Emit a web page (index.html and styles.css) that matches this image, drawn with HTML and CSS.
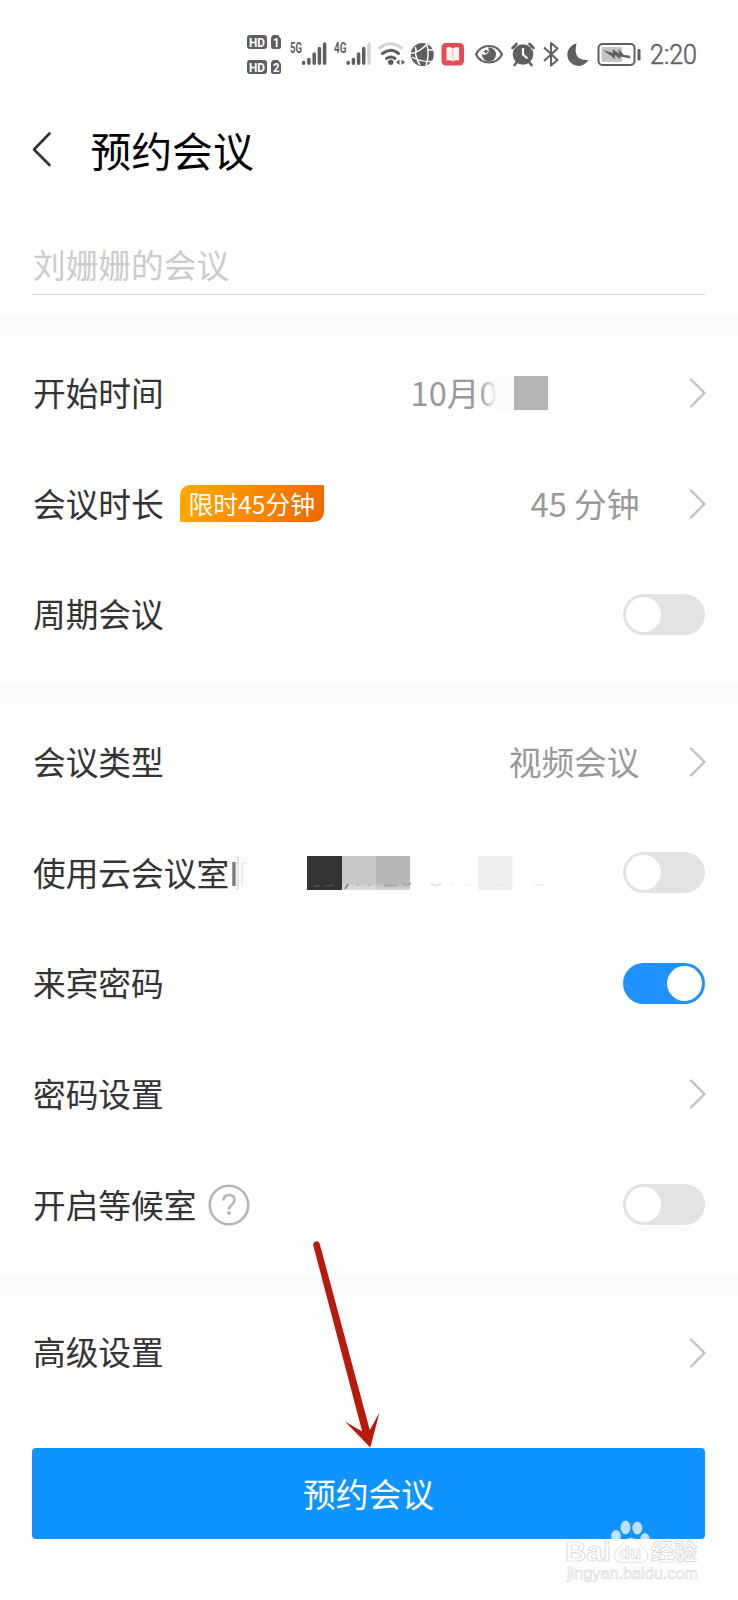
FILE: index.html
```html
<!DOCTYPE html>
<html lang="zh-CN">
<head>
<meta charset="utf-8">
<title>预约会议</title>
<link rel="stylesheet" href="styles.css">
</head>
<body>
<div class="page">
  <header class="status-bar">
    <svg class="status-icons" width="480" height="70" viewBox="235 20 480 70" fill="#5f5f5f">
      <g class="hd">
        <rect x="247" y="35" width="20" height="14" rx="3"/>
        <path d="M273 35h5l3 4v7.500q0 2.500-2.500 2.500h-5q-2.500 0-2.500-2.500v-9z"/>
        <rect x="247" y="60" width="20" height="14" rx="3"/>
        <path d="M273 60h5l3 4v7.500q0 2.500-2.500 2.500h-5q-2.500 0-2.500-2.500v-9z"/>
        <g fill="#fff">
          <text x="249" y="46.800" textLength="16" lengthAdjust="spacingAndGlyphs">HD</text>
          <text x="273" y="46.800" textLength="6.500" lengthAdjust="spacingAndGlyphs">1</text>
          <text x="249" y="71.800" textLength="16" lengthAdjust="spacingAndGlyphs">HD</text>
          <text x="273" y="71.800" textLength="6.500" lengthAdjust="spacingAndGlyphs">2</text>
        </g>
      </g>
      <g class="net">
        <text x="290" y="52.500" textLength="12" lengthAdjust="spacingAndGlyphs">5G</text>
        <text x="334" y="52.500" textLength="12.500" lengthAdjust="spacingAndGlyphs">4G</text>
      </g>
      <g stroke="#5f5f5f" stroke-width="3.500" stroke-linecap="round">
        <path d="M303.600 62.500v.8M308.900 59.500v3.800M314.200 54v9.300M319.400 48.500v14.800M324.600 44v19.300"/>
        <path d="M348.200 62.500v.8M353.400 59.500v3.800M358.600 54v9.300M363.700 48.500v14.800"/>
        <path d="M369 44v19.300" stroke="#d3d3d3"/>
      </g>
      <g fill="none" stroke="#5f5f5f" stroke-width="3" stroke-linecap="round">
        <path d="M379.500 48q11.500-8.500 22 0" stroke="#d3d3d3"/>
        <path d="M382.500 53.500q8.500-6.500 16 0M386.500 58.500q4.500-3 8.500 0"/>
      </g>
      <circle cx="390.800" cy="62.300" r="2.700"/>
      <path d="M399.500 59.500v5.500l-3.500-2.700zM401.500 59.500v5.500l3.500-2.700z"/>
      <circle cx="422.300" cy="54.500" r="11.500"/>
      <g fill="none" stroke="#fff" stroke-width="1.400">
        <path d="M411 53.500Q420 52 426.500 44.500M412 57Q420 62 432 61.500M426.500 43.500Q430 54 426 65.500M415 47Q417 50 415.500 54Q417 61 420 65M427.500 50L433 50"/>
      </g>
      <rect x="441.500" y="43" width="22.500" height="22.500" rx="4.500" fill="#e44c54"/>
      <path d="M446.500 47.500q4-1.500 6.300 1q2.300-2.500 6.300-1v13q-4-1-6.300 1q-2.300-2-6.300-1z" fill="#fff3f3"/>
      <path d="M452.800 48v13" stroke="#f0b3b6" stroke-width="1"/>
      <path d="M476 54.300Q480 46 489 46Q498 46 502 54.300Q498 62.600 489 62.600Q480 62.600 476 54.300z" fill="none" stroke="#5f5f5f" stroke-width="2"/>
      <circle cx="489" cy="54.500" r="7"/>
      <path d="M482 54q0-6 6-6.700q2 5-1.500 7q-2.500 1-4.500-.3z" fill="#fff"/>
      <circle cx="486" cy="51.500" r="1.700"/>
      <g>
        <circle cx="523" cy="54.500" r="10.300"/>
        <path d="M512.500 48l4-4M529.500 44l4 4M517 62l-2.500 3M529 62l2.500 3" stroke="#5f5f5f" stroke-width="2.600" stroke-linecap="round"/>
        <path d="M523 48v6.500l4.500 4" fill="none" stroke="#fff" stroke-width="2.200"/>
      </g>
      <path d="M544 47.500l13.500 12.500l-6.500 5.500V43l6.500 5.500L544 61" fill="none" stroke="#5f5f5f" stroke-width="2" stroke-linejoin="round"/>
      <path d="M576.500 43.500a11.300 11.300 0 1 0 12 16.500q-16 1.500-12-16.500z"/>
      <rect x="598.500" y="44" width="36" height="21" rx="4" fill="#fff" stroke="#5f5f5f" stroke-width="2"/>
      <rect x="601.500" y="47" width="20.500" height="15" rx="1" fill="#c5c5c5"/>
      <path d="M603 50l10 3l-.5-4l6.500 4.500l-.500-4.500l5.500 6l5 .5l-1-2l3 5l-11-2l.5 2.500l-6-4l.5 4l-6-4.500z"/>
      <rect x="637.500" y="49" width="3" height="11.500" rx="1.300"/>
      <text class="clock" x="650" y="64" textLength="47" lengthAdjust="spacingAndGlyphs">2:20</text>
    </svg>
  </header>

  <div class="title-bar">
    <svg class="back" width="20" height="38" viewBox="0 0 20 38"><path d="M17.500 2.500L2 18.500l15.500 15.500"/></svg>
    <h1 class="title">预约会议</h1>
  </div>

  <div class="name-field"><span class="placeholder">刘姗姗的会议</span></div>

  <section class="group">
    <div class="row">
      <span class="label">开始时间</span>
      <span class="value start-time">10月0<span class="mask"></span></span>
      <svg class="chevron" viewBox="0 0 18 32"><path d="M2 2.500L15.500 16L2 29.500"/></svg>
    </div>
    <div class="row">
      <span class="label">会议时长</span>
      <span class="badge">限时45分钟</span>
      <span class="value">45 分钟</span>
      <svg class="chevron" viewBox="0 0 18 32"><path d="M2 2.500L15.500 16L2 29.500"/></svg>
    </div>
    <div class="row">
      <span class="label">周期会议</span>
      <span class="switch"></span>
    </div>
  </section>

  <section class="group">
    <div class="row">
      <span class="label">会议类型</span>
      <span class="value">视频会议</span>
      <svg class="chevron" viewBox="0 0 18 32"><path d="M2 2.500L15.500 16L2 29.500"/></svg>
    </div>
    <div class="row">
      <span class="label">使用云会议室</span>
      <svg class="mosaic" width="320" height="36" viewBox="230 854 320 36">
        <defs>
          <linearGradient id="fade"><stop offset="0" stop-color="#fff"/><stop offset="1" stop-color="#dcdcdc"/></linearGradient>
          <linearGradient id="drop" x2="0" y2="1"><stop offset=".8" stop-color="#fff" stop-opacity="0"/><stop offset="1" stop-color="#fff" stop-opacity=".45"/></linearGradient>
        </defs>
        <rect x="234" y="855" width="5" height="34" fill="url(#fade)"/>
        <rect x="232.300" y="861" width="3.200" height="24" fill="#777"/>
        <path d="M242 885v-23h5" fill="none" stroke="#ededed" stroke-width="2"/>
        <rect x="307" y="855" width="35" height="34" fill="#333"/>
        <rect x="342" y="855" width="34" height="34" fill="#c8c8c8"/>
        <rect x="376" y="855" width="34" height="34" fill="#b7b7b7"/>
        <rect x="342" y="855" width="68" height="34" fill="url(#drop)"/>
        <rect x="478" y="855" width="34.500" height="34" fill="#efefef"/>
        <g fill="none" stroke-width="1.800">
          <path d="M314 885h6M325 884.500q4 1.500 8-1" stroke="#484848"/>
          <path d="M345 888l3-5" stroke="#888"/>
          <path d="M358 883v2M368 885l2-2" stroke="#b2b2b2"/>
          <path d="M384 884.500h13M402 882q4 4 9 0" stroke="#a8a8a8"/>
          <path d="M431 882q5 5 10 0" stroke="#e4e4e4"/>
          <path d="M450 884l2-3M466 883q3 2 6 0M534 884h10" stroke="#f2f2f2"/>
          <path d="M496 883q4 3 8 0" stroke="#e8e8e8"/>
        </g>
      </svg>
      <span class="switch"></span>
    </div>
    <div class="row">
      <span class="label">来宾密码</span>
      <span class="switch on"></span>
    </div>
    <div class="row">
      <span class="label">密码设置</span>
      <svg class="chevron" viewBox="0 0 18 32"><path d="M2 2.500L15.500 16L2 29.500"/></svg>
    </div>
    <div class="row">
      <span class="label">开启等候室</span>
      <svg class="help" width="42" height="42" viewBox="0 0 42 42">
        <circle cx="21" cy="21" r="19.300"/>
        <path d="M15.500 16.500q0-5.500 5.500-5.500t5.500 5q0 2.500-3 5q-2.500 2-2.500 4.500"/>
        <circle class="dot" cx="21" cy="29" r="1.900"/>
      </svg>
      <span class="switch"></span>
    </div>
  </section>

  <section class="group">
    <div class="row">
      <span class="label">高级设置</span>
      <svg class="chevron" viewBox="0 0 18 32"><path d="M2 2.500L15.500 16L2 29.500"/></svg>
    </div>
  </section>

  <button class="submit"><span class="submit-text">预约会议</span></button>

  <svg class="arrow" width="80" height="210" viewBox="310 1238 80 210" fill="#b81a0c">
    <path d="M313.300 1245.500a3.300 3.300 0 0 1 6.500-1.500L369.800 1430L379.500 1412.500L370.300 1447.500L345 1421.500L362.200 1431.500z"/>
  </svg>

  <svg class="watermark" width="150" height="76" viewBox="560 1516 150 76">
    <g fill="#fff" fill-opacity=".72" stroke="#e2e2e2" stroke-opacity=".6" stroke-width=".6">
      <ellipse cx="616" cy="1536" rx="4.700" ry="5.700"/>
      <ellipse cx="625.500" cy="1527.500" rx="4.700" ry="6.700"/>
      <ellipse cx="637.300" cy="1528" rx="4.700" ry="6.300"/>
      <ellipse cx="645" cy="1539" rx="4.500" ry="5.700"/>
      <path stroke="#cfcfcf" stroke-opacity="1" d="M631 1538c-5 0-7 5-11 9c-4 3-7 8-5 12c3 5 9 3 16 3s13 2 16-3c2-4-1-9-5-12c-4-4-6-9-11-9z"/>
    </g>
    <g class="mark-text">
      <text x="565" y="1561" font-size="27" textLength="46" lengthAdjust="spacingAndGlyphs">Bai</text>
      <text x="619" y="1559" font-size="19" textLength="22" lengthAdjust="spacingAndGlyphs">du</text>
      <text x="651" y="1560" font-size="23" textLength="46" lengthAdjust="spacingAndGlyphs">经验</text>
      <text class="mark-url" x="567" y="1579" font-size="16" textLength="131" lengthAdjust="spacingAndGlyphs">jingyan.baidu.com</text>
    </g>
  </svg>
</div>
</body>
</html>
```
FILE: styles.css
```css
* { box-sizing: border-box; }

body {
  margin: 0;
  background: #fefefe;
  font-family: "Noto Sans CJK SC", sans-serif;
  color: #333;
}

.page {
  position: relative;
  width: 738px;
  height: 1600px;
  overflow: hidden;
}

.status-bar {
  display: flex;
  height: 110px;
  padding: 20px 0 0 235px;
}

.hd, .net { font-family: Roboto, sans-serif; font-weight: 700; }
.hd { font-size: 13.5px; }
.net { font-size: 15px; }
.clock { font-family: Roboto, sans-serif; font-size: 27px; font-weight: 300; stroke: #5f5f5f; stroke-width: .5; }

.title-bar {
  display: flex;
  align-items: center;
  gap: 39px;
  height: 80px;
  padding-left: 31.5px;
}

.back path {
  fill: none;
  stroke: #333;
  stroke-width: 2.6;
  stroke-linecap: round;
  stroke-linejoin: round;
}

.title {
  margin: 0;
  font-size: 40.8px;
  font-weight: 400;
  line-height: 60px;
  color: #000;
}

.name-field {
  display: flex;
  align-items: center;
  height: 105px;
  margin: 0 33px 21px 32px;
  padding: 44px 0 0 1px;
  border-bottom: 1.5px solid #d6d6d6;
}

.placeholder {
  font-size: 32.7px;
  line-height: 48px;
  color: #ccc;
}

.group {
  padding: 2px 33px 15px 33px;
  border-top: 20px solid #f9f9f9;
}

.row {
  display: flex;
  align-items: center;
  height: 110.7px;
  font-size: 32.7px;
  line-height: 48px;
  white-space: nowrap;
}

.label, .value { margin-top: -3px; }

.value {
  margin-left: auto;
  color: #999;
}

.start-time {
  position: relative;
  width: 229px;
}

.mask {
  position: absolute;
  top: 8px;
  left: 68px;
  width: 69px;
  height: 34px;
  background: linear-gradient(90deg, rgba(254,254,254,0) 0, #fafafa 18px, #fafafa 35px, #b3b3b3 35px);
}

.chevron {
  width: 18px;
  height: 32px;
  margin-left: auto;
  margin-right: -1.5px;
}

.value + .chevron { margin-left: 49px; }

.chevron path {
  fill: none;
  stroke: #c2c2c2;
  stroke-width: 2.4;
  stroke-linecap: round;
  stroke-linejoin: round;
}

.badge {
  width: 144px;
  height: 37px;
  margin: -2px 0 0 16px;
  border-radius: 10px 1px 10px 1px;
  background: linear-gradient(105deg, #ffaa00, #ee6800);
  font-size: 24.8px;
  line-height: 37px;
  text-align: center;
  color: #fff;
}

.switch {
  display: flex;
  width: 82px;
  height: 41px;
  margin: -1px 0 0 auto;
  padding: 3px;
  border-radius: 21px;
  background: #e2e2e2;
}

.switch::before {
  content: "";
  width: 35px;
  height: 35px;
  border-radius: 50%;
  background: #fff;
}

.switch.on {
  justify-content: flex-end;
  background: #1e90ff;
}

.mosaic { margin-left: 1px; margin-top: -1px; }

.help {
  margin-left: 12px;
  fill: none;
  stroke: #b5b5b5;
  stroke-width: 2.5;
}

.help .dot { fill: #b5b5b5; stroke: none; }

.submit {
  display: block;
  width: 673px;
  height: 90.5px;
  margin: 25px 0 0 32px;
  padding: 0;
  border: 0;
  border-radius: 4px;
  background: #0f94ff;
  font: 400 32.8px/90px "Noto Sans CJK SC", sans-serif;
  color: #fff;
}

.submit-text {
  display: block;
  margin-top: -1px;
}

.arrow {
  position: absolute;
  left: 310px;
  top: 1238px;
}

.watermark {
  position: absolute;
  left: 560px;
  top: 1516px;
}

.mark-text {
  fill: #fff;
  stroke: #d2d2d2;
  stroke-width: .7;
  font-family: "Liberation Sans", "Noto Sans CJK SC", sans-serif;
  font-weight: 700;
}

.mark-url { font-weight: 400; stroke: #dcdcdc; }
```
